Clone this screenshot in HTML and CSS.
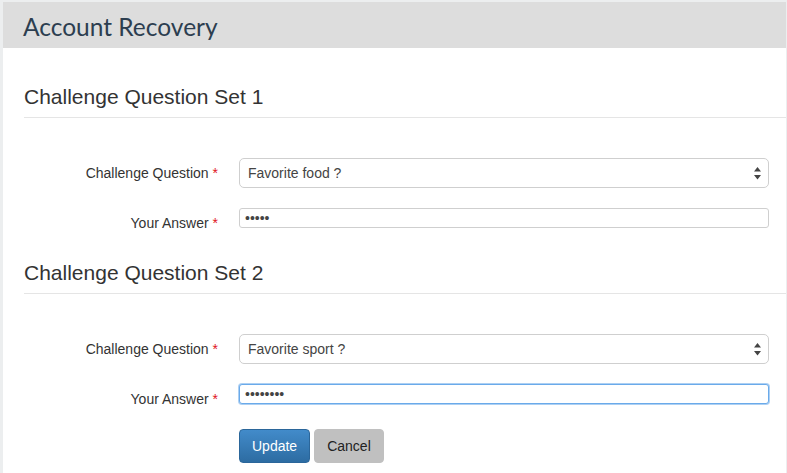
FILE: index.html
```html
<!DOCTYPE html>
<html lang="en">
<head>
<meta charset="utf-8">
<title>Account Recovery</title>
<link rel="stylesheet" href="styles.css">
</head>
<body>
<div class="page">
  <header class="page-header">
    <h1 class="page-title">Account Recovery</h1>
  </header>
  <main class="content">
    <section class="qset">
      <h2 class="qset-title">Challenge Question Set 1</h2>
      <div class="form-row">
        <label class="form-label">Challenge Question <span class="req">*</span></label>
        <div class="control select-wrap">
          <select class="select">
            <option>Favorite food ?</option>
          </select>
          <svg class="select-arrows" width="7" height="13" viewBox="0 0 7 13"><path d="M3.5 0 L7 4.5 L0 4.5 Z M0 8 L7 8 L3.5 12.5 Z" fill="#444"/></svg>
        </div>
      </div>
      <div class="form-row">
        <label class="form-label label-small">Your Answer <span class="req">*</span></label>
        <div class="control">
          <input class="answer" type="password" value="abcde">
        </div>
      </div>
    </section>
    <section class="qset qset-second">
      <h2 class="qset-title">Challenge Question Set 2</h2>
      <div class="form-row">
        <label class="form-label">Challenge Question <span class="req">*</span></label>
        <div class="control select-wrap">
          <select class="select">
            <option>Favorite sport ?</option>
          </select>
          <svg class="select-arrows" width="7" height="13" viewBox="0 0 7 13"><path d="M3.5 0 L7 4.5 L0 4.5 Z M0 8 L7 8 L3.5 12.5 Z" fill="#444"/></svg>
        </div>
      </div>
      <div class="form-row">
        <label class="form-label label-small">Your Answer <span class="req">*</span></label>
        <div class="control">
          <input class="answer answer-focus" type="password" value="abcdefgh">
        </div>
      </div>
      <div class="actions">
        <button class="btn btn-primary" type="button">Update</button>
        <button class="btn btn-cancel" type="button">Cancel</button>
      </div>
    </section>
  </main>
</div>
</body>
</html>
```

FILE: styles.css
```css
html, body {
  margin: 0;
  padding: 0;
}
body {
  background: #eceeef;
  font-family: "Liberation Sans", Arial, sans-serif;
  font-size: 14px;
  color: #333;
}
.page {
  margin: 2px 1px 0 3px;
  background: #fff;
  min-height: 471px;
}
.page-header {
  background: #dddddd;
  height: 46px;
  box-sizing: border-box;
  padding: 10px 0 0 20px;
}
.page-title {
  margin: 0;
  font-family: Lato, "Open Sans", sans-serif;
  font-weight: 400;
  font-size: 24.5px;
  line-height: 30px;
  color: #2c3e50;
}
.content {
  padding: 0;
}
.qset-title {
  margin: 37px 0 0 21px;
  padding-bottom: 8px;
  border-bottom: 1px solid #e5e5e5;
  font-weight: 400;
  font-size: 21px;
  line-height: 24px;
  color: #333;
}
.qset-second .qset-title {
  margin-top: 33px;
}
.form-row {
  display: flex;
  align-items: flex-start;
  padding-right: 17px;
  margin-top: 20px;
}
.qset-title + .form-row {
  margin-top: 40px;
}
.form-label {
  width: 215px;
  flex: none;
  margin-right: 21px;
  text-align: right;
  line-height: 20px;
  padding-top: 5px;
  color: #333;
}
.label-small {
  padding-top: 5px;
  margin-bottom: -5px;
}
.req {
  color: #e0161b;
}
.control {
  flex: 1;
  min-width: 0;
}
.select-wrap {
  position: relative;
}
.select {
  display: block;
  width: 100%;
  height: 30px;
  box-sizing: border-box;
  margin: 0;
  padding: 0 24px 0 8px;
  border: 1px solid #cfcfcf;
  border-radius: 5px;
  background: #fff;
  font-family: "Liberation Sans", Arial, sans-serif;
  font-size: 14px;
  color: #444;
  -webkit-appearance: none;
  appearance: none;
  outline: none;
}
.select-arrows {
  position: absolute;
  right: 8px;
  top: 9px;
  pointer-events: none;
}
.answer {
  display: block;
  width: 100%;
  height: 20px;
  box-sizing: border-box;
  margin: 0;
  padding: 0 5px;
  border: 1px solid #cfcfcf;
  border-radius: 3px;
  background: #fff;
  font-family: "Liberation Sans", Arial, sans-serif;
  font-size: 14px;
  color: #444;
  outline: none;
}
.answer-focus {
  border-color: #6aaaea;
  box-shadow: 0 0 0 1px rgba(106, 170, 234, 0.55);
}
.actions {
  display: flex;
  gap: 4px;
  margin: 25px 0 0 236px;
}
.btn {
  height: 34px;
  box-sizing: border-box;
  padding: 0 12px;
  border-radius: 4px;
  font-family: "Liberation Sans", Arial, sans-serif;
  font-size: 14px;
  line-height: 32px;
  cursor: pointer;
}
.btn-primary {
  color: #fff;
  background: linear-gradient(to bottom, #428bca 0%, #2d6ca2 100%);
  border: 1px solid #2b669a;
}
.btn-cancel {
  color: #222;
  background: #c0c0c0;
  border: 1px solid #c0c0c0;
}
```
